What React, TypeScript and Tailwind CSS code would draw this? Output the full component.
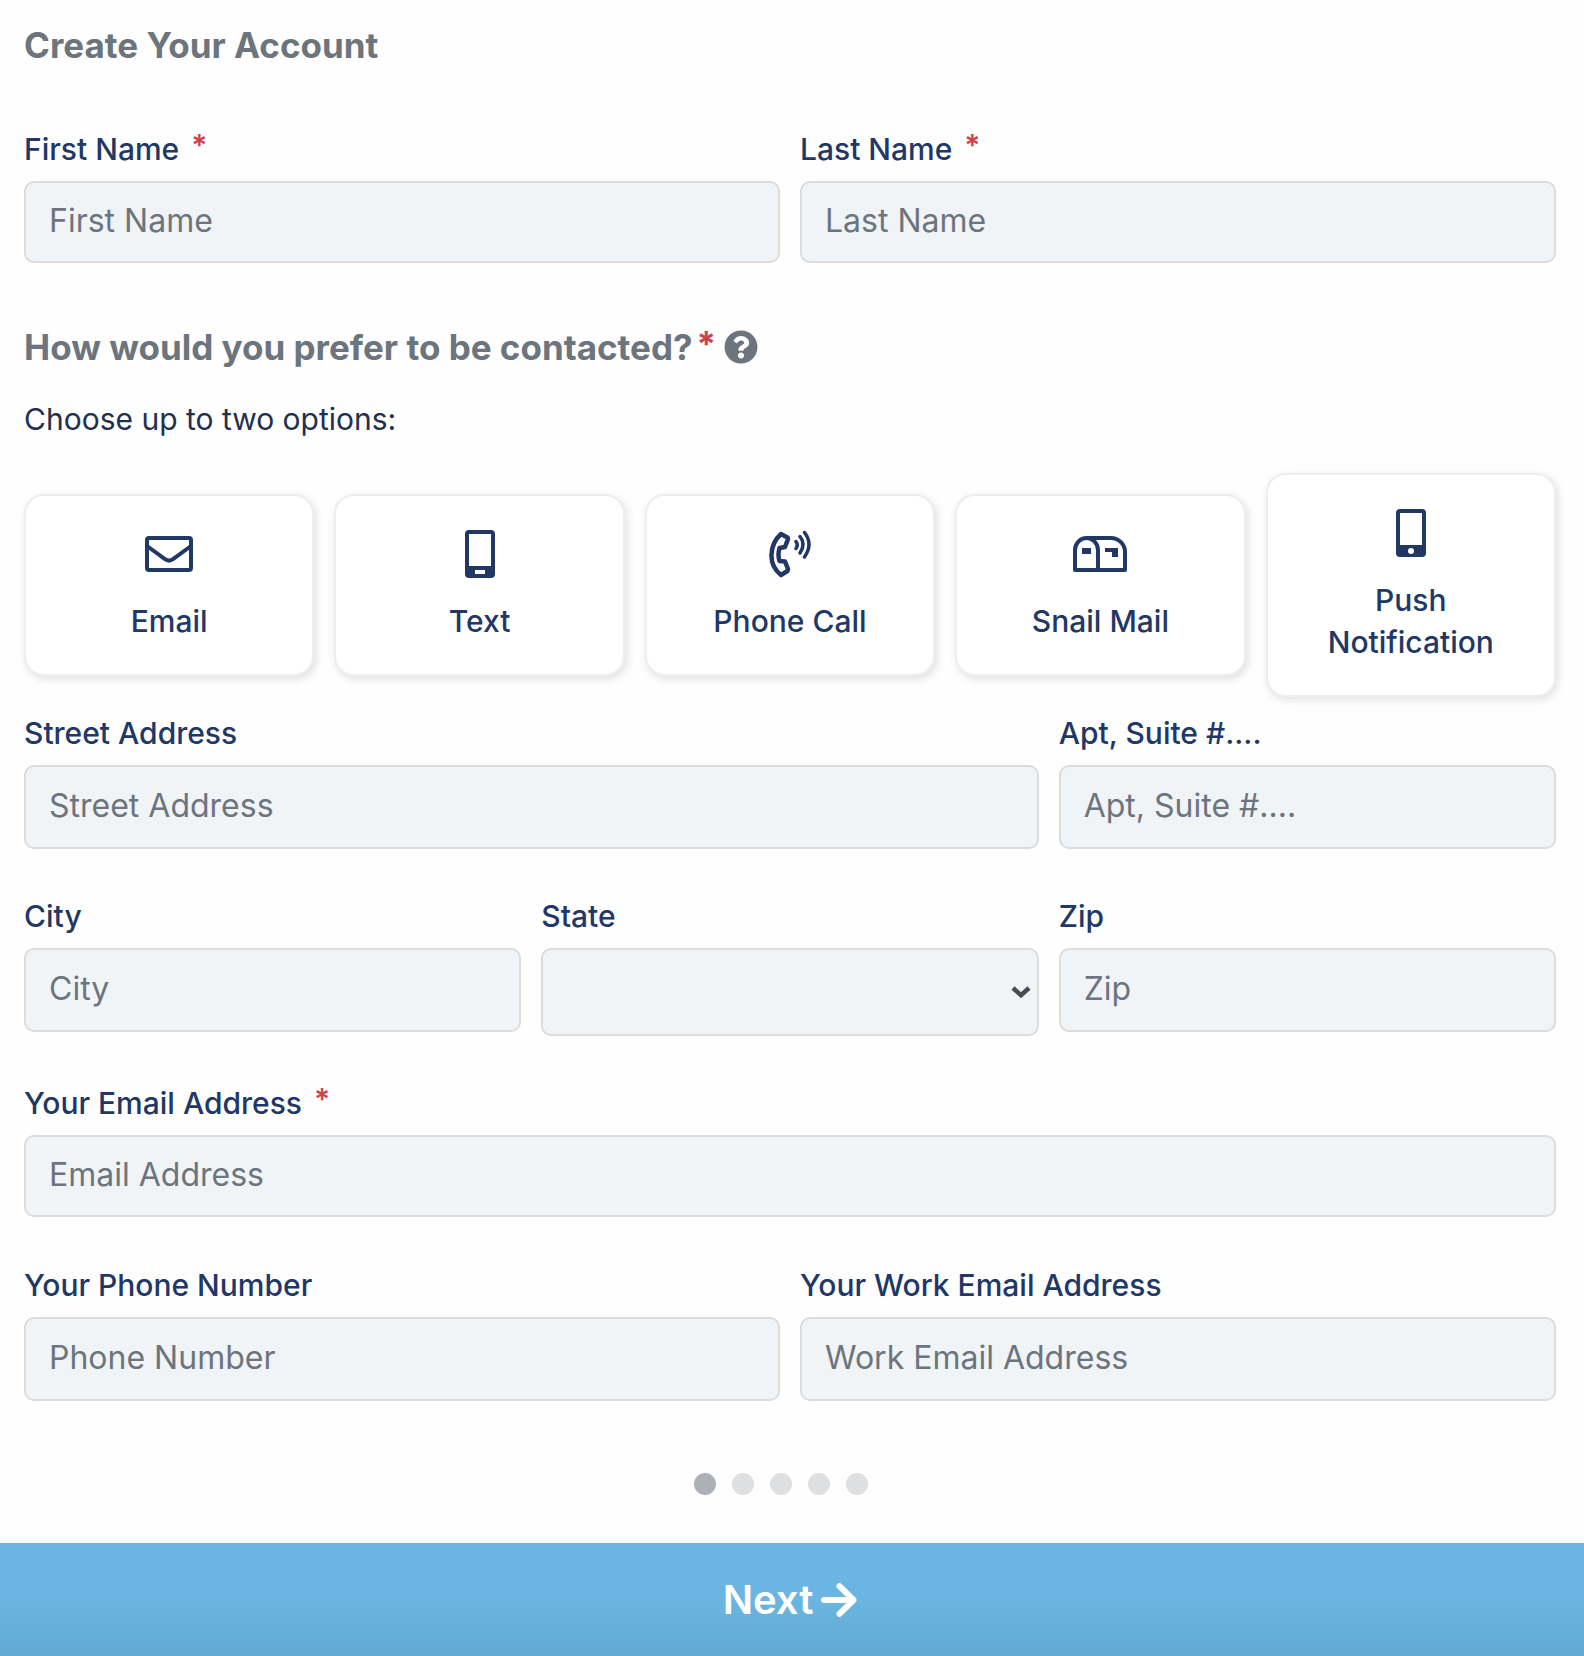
import { useState } from "react";
import type { ReactNode } from "react";
import { FaQuestionCircle } from "react-icons/fa";

type FieldProps = {
  id: string;
  label: string;
  placeholder?: string;
  type?: string;
  required?: boolean;
  className?: string;
};

const methods: { name: string; icon: ReactNode }[] = [
  { name: "Email", icon: <EmailIcon /> },
  { name: "Text", icon: <TextIcon /> },
  { name: "Phone Call", icon: <CallIcon /> },
  { name: "Snail Mail", icon: <MailboxIcon /> },
  { name: "Push Notification", icon: <PushIcon /> },
];

export default function App() {
  const [picked, setPicked] = useState<string[]>([]);

  const toggle = (name: string) => {
    if (picked.includes(name)) {
      setPicked(picked.filter((p) => p !== name));
    } else if (picked.length < 2) {
      setPicked([...picked, name]);
    }
  };

  return (
    <form
      className="bg-[#fefefe] font-['Inter',sans-serif] text-[30px] leading-[42px] text-[#213765]"
      onSubmit={(e) => e.preventDefault()}
    >
      <div className="pl-6 pr-7 pt-6">
        <h1 className="text-[35px] font-bold text-[#6c757d]">Create Your Account</h1>

        <div className="mt-[62px] grid grid-cols-2 gap-5">
          <Field id="first" label="First Name" placeholder="First Name" required />
          <Field id="last" label="Last Name" placeholder="Last Name" required />
        </div>

        <h2 className="mt-[63px] flex items-center text-[35px] font-bold text-[#6c757d]">
          How would you prefer to be contacted?
          <span className="ml-1 pb-1.5 leading-none text-[#d0424b]">*</span>
          <FaQuestionCircle className="ml-2 size-[34px]" />
        </h2>
        <p className="mt-[30px] text-[#213050]">Choose up to two options:</p>

        <div className="mt-[33px] grid grid-cols-5 items-center gap-5">
          {methods.map((m) => (
            <button
              key={m.name}
              type="button"
              aria-pressed={picked.includes(m.name)}
              onClick={() => toggle(m.name)}
              className="flex flex-col items-center rounded-[20px] border-2 border-[#eeeeee] bg-white px-10 pb-8 pt-[34px] font-medium shadow-[2px_3px_8px_rgba(0,0,0,0.12)] aria-pressed:border-[#69b4e0]"
            >
              <span className="mb-[22px] flex h-12 items-center">{m.icon}</span>
              {m.name}
            </button>
          ))}
        </div>

        <div className="mt-[15px] grid grid-cols-3 items-start gap-x-5 gap-y-[46px]">
          <Field
            id="street"
            label="Street Address"
            placeholder="Street Address"
            className="col-span-2"
          />
          <Field id="apt" label="Apt, Suite #...." placeholder="Apt, Suite #...." />
          <Field id="city" label="City" placeholder="City" />
          <div>
            <label htmlFor="state" className="mb-[11px] block font-medium">
              State
            </label>
            <div className="relative">
              <select
                id="state"
                className="block h-[88px] w-full appearance-none rounded-[10px] border-2 border-[#dcdcdc] bg-[#f0f4f7] px-6 text-[32px]"
              >
                <option value=""></option>
                <option>California</option>
                <option>New York</option>
                <option>Texas</option>
              </select>
              <svg
                className="pointer-events-none absolute right-2 top-1/2 h-3 w-5 -translate-y-1/2"
                viewBox="0 0 20 12"
                fill="none"
                stroke="#4a4b55"
                strokeWidth="4.5"
              >
                <path d="M2 2 10 9.2 18 2" />
              </svg>
            </div>
          </div>
          <Field id="zip" label="Zip" placeholder="Zip" />
        </div>

        <Field
          id="email"
          type="email"
          label="Your Email Address"
          placeholder="Email Address"
          required
          className="mt-[46px]"
        />

        <div className="mt-[47px] grid grid-cols-2 gap-5">
          <Field id="phone" type="tel" label="Your Phone Number" placeholder="Phone Number" />
          <Field
            id="work"
            type="email"
            label="Your Work Email Address"
            placeholder="Work Email Address"
          />
        </div>
      </div>

      <div className="flex justify-center gap-4 pr-[22px] pt-[72px]">
        <span className="size-[22px] rounded-full bg-[#adb1b6]" />
        <span className="size-[22px] rounded-full bg-[#dedfe1]" />
        <span className="size-[22px] rounded-full bg-[#dedfe1]" />
        <span className="size-[22px] rounded-full bg-[#dedfe1]" />
        <span className="size-[22px] rounded-full bg-[#dedfe1]" />
      </div>

      <button
        type="submit"
        className="mt-12 flex h-[113px] w-full items-center justify-center gap-2 bg-linear-to-b from-[#6ab5e1] from-50% to-[#62aad4] pr-1 text-[40px] font-semibold text-white"
      >
        Next
        <svg
          className="h-[34px] w-9"
          viewBox="0 0 36 34"
          fill="none"
          stroke="currentColor"
          strokeWidth="6"
          strokeLinecap="round"
        >
          <path d="M3 17H31" />
          <path d="M18.5 3.2 32.5 17 18.5 30.8" strokeLinejoin="round" />
        </svg>
      </button>
    </form>
  );
}

function Field({ id, label, placeholder, type = "text", required, className }: FieldProps) {
  return (
    <div className={className}>
      <label htmlFor={id} className="mb-[11px] flex font-medium">
        {label}
        {required && <span className="-mt-1 ml-3 h-0 font-semibold text-[#d0424b]">*</span>}
      </label>
      <input
        id={id}
        type={type}
        placeholder={placeholder}
        className={`block w-full rounded-[10px] border-2 border-[#dcdcdc] bg-[#f0f4f7] px-[23px] pb-1 text-[32px] placeholder:text-[#6c757d] ${
          required ? "h-[82px]" : "h-[84px]"
        }`}
      />
    </div>
  );
}

function EmailIcon() {
  return (
    <svg className="h-9 w-12" viewBox="0 0 48 36" fill="none" stroke="currentColor" strokeWidth="4">
      <rect x="2" y="2" width="44" height="32" rx="2" />
      <path d="M2 10 20 23.2Q24 26 28 23.2L46 10" />
    </svg>
  );
}

function TextIcon() {
  return (
    <svg className="h-12 w-[30px]" viewBox="0 0 30 48" fill="currentColor" fillRule="evenodd">
      <path d="M4 0H26a4 4 0 0 1 4 4V44a4 4 0 0 1-4 4H4a4 4 0 0 1-4-4V4a4 4 0 0 1 4-4ZM4 4V36H26V4ZM10 40V44H20V40Z" />
    </svg>
  );
}

function PushIcon() {
  return (
    <svg className="h-12 w-[30px]" viewBox="0 0 30 48" fill="currentColor" fillRule="evenodd">
      <path d="M4 0H26a4 4 0 0 1 4 4V44a4 4 0 0 1-4 4H4a4 4 0 0 1-4-4V4a4 4 0 0 1 4-4ZM4 4V36H26V4ZM15 39a3 3 0 1 0 0 6 3 3 0 0 0 0-6Z" />
    </svg>
  );
}

function CallIcon() {
  return (
    <svg
      className="h-12 w-[42px]"
      viewBox="0 0 42 48"
      fill="none"
      stroke="currentColor"
      strokeWidth="4.5"
      strokeLinecap="round"
      strokeLinejoin="round"
    >
      <path d="M12 4 18.5 7.5 19 9 16 17 10.5 18Q8.5 25 10.5 31L16 31.5 19 39 18.5 41 12 45Q2 37 2.5 24.500T12 4Z" />
      <path
        d="M27 11.5Q29.5 15 27 18.5M31 6.500Q37 14 31 23M35.5 2.500Q44.500 14 35.5 27"
        strokeWidth="3.5"
      />
    </svg>
  );
}

function MailboxIcon() {
  return (
    <svg className="h-9 w-[54px]" viewBox="0 0 54 36" fill="none" stroke="currentColor" strokeWidth="4">
      <path d="M13.5 2H38A14 14 0 0 1 52 16V34H2V14A11.5 12 0 0 1 25 14V34" strokeLinejoin="round" />
      <path d="M9 12H18V18H9ZM32 12H45V21H39V16H32Z" fill="currentColor" stroke="none" />
    </svg>
  );
}
